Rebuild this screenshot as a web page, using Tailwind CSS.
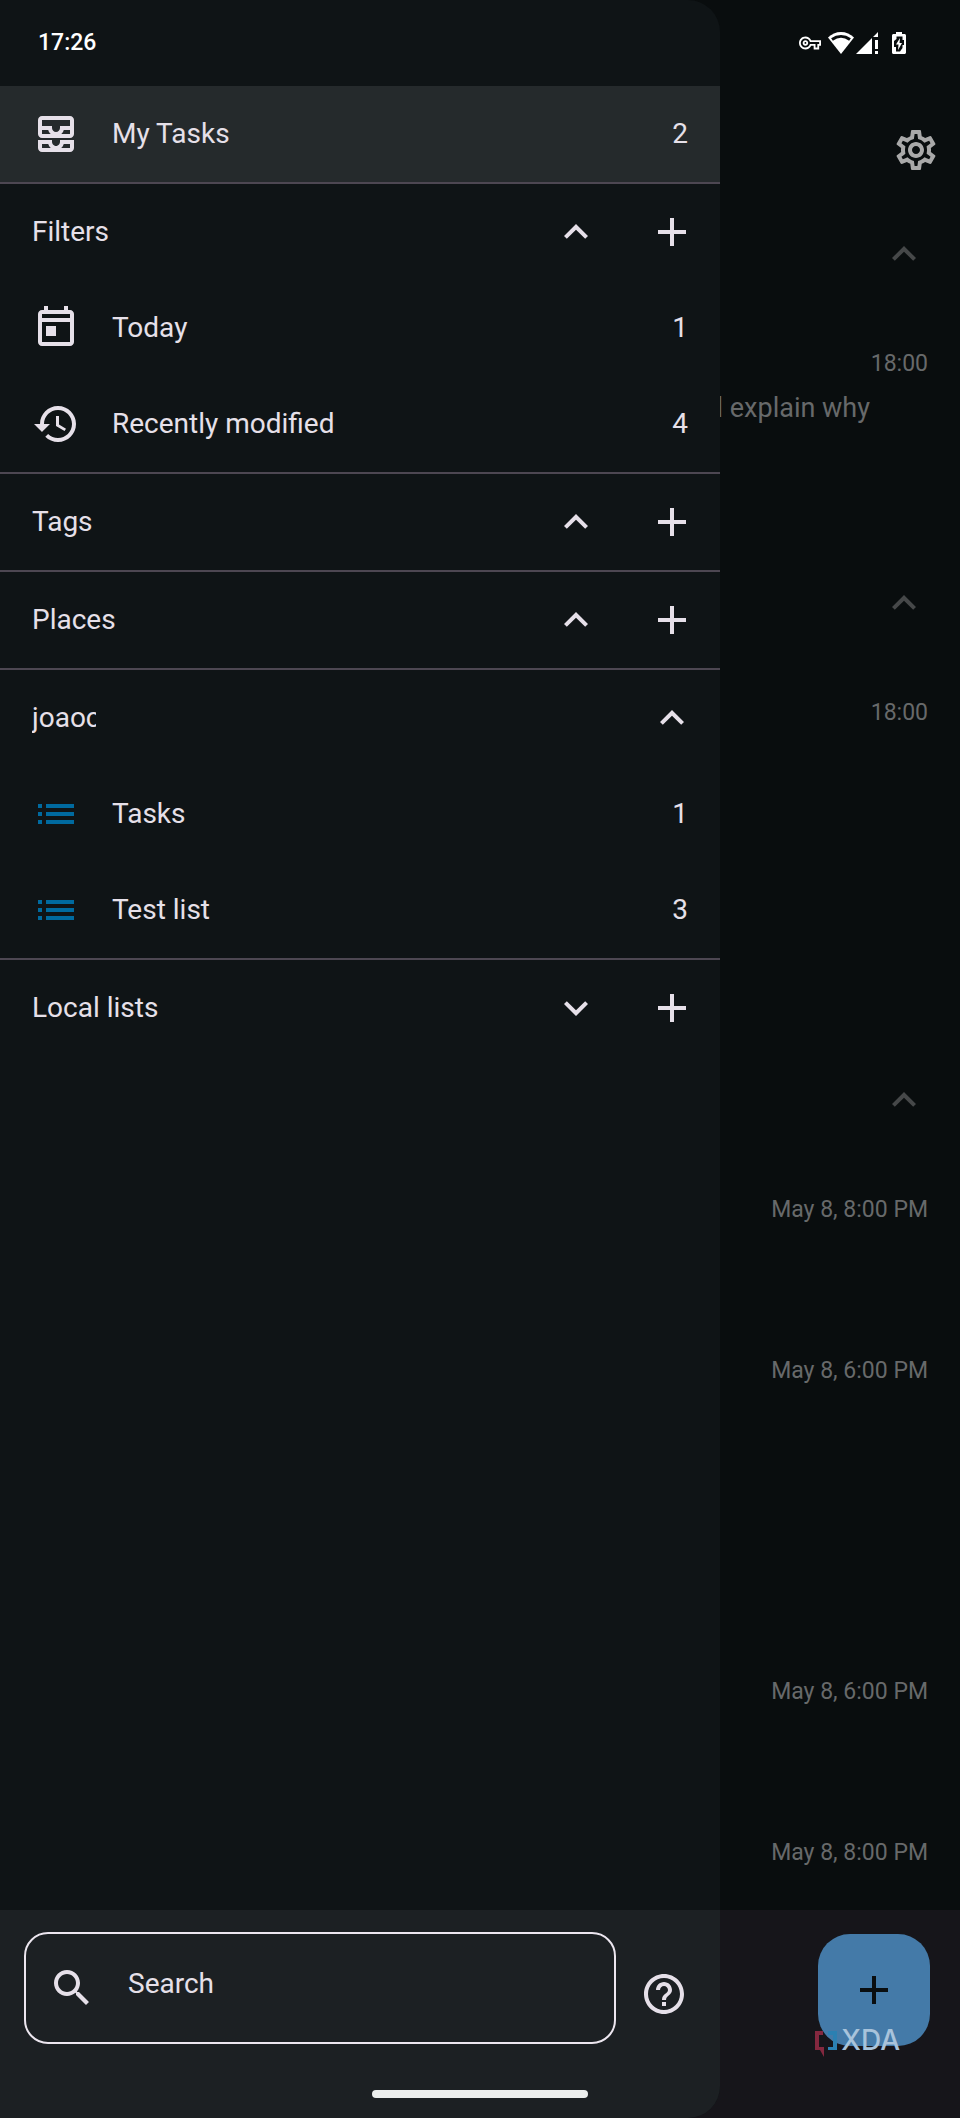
<!DOCTYPE html>
<html lang="en">
<head>
    <meta charset="UTF-8">
    <meta name="viewport" content="width=device-width, initial-scale=1.0">
    <title>My Tasks</title>
    <script src="https://cdn.jsdelivr.net/npm/@tailwindcss/browser@4"></script>
</head>
<body class="bg-[#090d0e] font-[Roboto,sans-serif] text-[28px] leading-10 text-[#e6e0e9]">

<!-- Icons -->
<svg class="hidden" xmlns="http://www.w3.org/2000/svg">
    <symbol id="icon-up" viewBox="0 0 24 24"><path d="M12 8l-6 6 1.41 1.41L12 10.83l4.59 4.58L18 14z"/></symbol>
    <symbol id="icon-down" viewBox="0 0 24 24"><path d="M16.59 8.59L12 13.17 7.41 8.59 6 10l6 6 6-6z"/></symbol>
    <symbol id="icon-add" viewBox="0 0 24 24"><path d="M19 13h-6v6h-2v-6H5v-2h6V5h2v6h6v2z"/></symbol>
    <symbol id="icon-list" viewBox="0 0 24 24"><path d="M3 7h2v2H3zM3 11h2v2H3zM3 15h2v2H3zM7 7h14v2H7zM7 11h14v2H7zM7 15h14v2H7z"/></symbol>
</svg>

<div class="relative min-h-screen flex flex-col overflow-hidden">

    <!-- Task list behind the drawer -->
    <main class="flex-1 flex flex-col pl-[75%] pt-[86px] text-[23px] leading-7 text-[#67696a]">
        <div class="h-32 flex items-center justify-end pr-5">
            <button type="button" aria-label="Settings" class="text-[#a9a9a9]">
                <svg class="size-12 fill-current" viewBox="0 0 24 24"><path d="M19.43 12.98c.04-.32.07-.64.07-.98 0-.34-.03-.66-.07-.98l2.11-1.65c.19-.15.24-.42.12-.64l-2-3.46c-.09-.16-.26-.25-.44-.25-.06 0-.12.01-.17.03l-2.49 1c-.52-.4-1.08-.73-1.69-.98l-.38-2.65C14.46 2.18 14.25 2 14 2h-4c-.25 0-.46.18-.49.42l-.38 2.65c-.61.25-1.17.59-1.69.98l-2.49-1c-.06-.02-.12-.03-.18-.03-.17 0-.34.09-.43.25l-2 3.46c-.13.22-.07.49.12.64l2.11 1.65c-.04.32-.07.65-.07.98 0 .33.03.66.07.98l-2.11 1.65c-.19.15-.24.42-.12.64l2 3.46c.09.16.26.25.44.25.06 0 .12-.01.17-.03l2.49-1c.52.4 1.08.73 1.69.98l.38 2.65c.03.24.24.42.49.42h4c.25 0 .46-.18.49-.42l.38-2.65c.61-.25 1.17-.59 1.69-.98l2.49 1c.06.02.12.03.18.03.17 0 .34-.09.43-.25l2-3.46c.12-.22.07-.49-.12-.64l-2.11-1.65zm-1.98-1.71c.04.31.05.52.05.73 0 .21-.02.43-.05.73l-.14 1.13.89.7 1.08.84-.7 1.21-1.27-.51-1.04-.42-.9.68c-.43.32-.84.56-1.25.73l-1.06.43-.16 1.13-.2 1.35h-1.4l-.19-1.35-.16-1.13-1.06-.43c-.43-.18-.83-.41-1.23-.71l-.91-.7-1.06.43-1.27.51-.7-1.21 1.08-.84.89-.7-.14-1.13c-.03-.31-.05-.54-.05-.74s.02-.43.05-.73l.14-1.13-.89-.7-1.08-.84.7-1.21 1.27.51 1.04.42.9-.68c.43-.32.84-.56 1.25-.73l1.06-.43.16-1.13.2-1.35h1.39l.19 1.35.16 1.13 1.06.43c.43.18.83.41 1.23.71l.91.7 1.06-.43 1.27-.51.7 1.21-1.07.85-.89.7.14 1.13zM12 8c-2.21 0-4 1.79-4 4s1.79 4 4 4 4-1.79 4-4-1.79-4-4-4zm0 6c-1.1 0-2-.9-2-2s.9-2 2-2 2 .9 2 2-.9 2-2 2z"/></svg>
            </button>
        </div>

        <section>
            <div class="h-20 flex items-center justify-end pr-8">
                <button type="button" aria-label="Collapse section" class="text-[#464849]"><svg class="size-12 fill-current"><use href="#icon-up"/></svg></button>
            </div>
            <ul>
                <li class="h-[269px] pt-14">
                    <p class="pr-8 text-right">18:00</p>
                    <p class="mt-2.5 flex justify-end pr-[90px] text-[27px] leading-10 whitespace-nowrap">l explain why</p>
                </li>
            </ul>
        </section>

        <section>
            <div class="h-20 flex items-center justify-end pr-8">
                <button type="button" aria-label="Collapse section" class="text-[#464849]"><svg class="size-12 fill-current"><use href="#icon-up"/></svg></button>
            </div>
            <ul class="pr-8 text-right">
                <li class="h-[417px] pt-14">18:00</li>
            </ul>
        </section>

        <section>
            <div class="h-20 flex items-center justify-end pr-8">
                <button type="button" aria-label="Collapse section" class="text-[#464849]"><svg class="size-12 fill-current"><use href="#icon-up"/></svg></button>
            </div>
            <ul class="pr-8 text-right whitespace-nowrap">
                <li class="h-[161px] pt-14">May 8, 8:00 PM</li>
                <li class="h-[321px] pt-14">May 8, 6:00 PM</li>
                <li class="h-[161px] pt-14">May 8, 6:00 PM</li>
                <li class="pt-14">May 8, 8:00 PM</li>
            </ul>
        </section>
    </main>

    <!-- Bottom app bar -->
    <div class="relative h-[208px] bg-[#16151a] flex justify-end items-start pt-6 pr-[30px]">
        <button type="button" aria-label="New task" class="size-28 rounded-[32px] bg-[#447aa8] text-[#0a0e10] flex items-center justify-center">
            <svg class="size-12 fill-current"><use href="#icon-add"/></svg>
        </button>
        <!-- Watermark -->
        <div class="absolute top-[113px] right-[60px] flex items-center gap-1 font-[Inter,sans-serif] font-medium text-[28px] leading-8 text-[#a8c3db]">
            <svg class="w-[22px] h-[26px] mt-2" viewBox="0 0 22 26">
                <path fill="#84283f" d="M0 0h8v4H4v12h5v10l-4-7H0z"/>
                <path fill="#2b80b2" d="M13 0h9v19h-9v-3h5V4h-5z"/>
            </svg>
            <span>XDA</span>
        </div>
    </div>

    <!-- Navigation drawer -->
    <aside class="absolute inset-y-0 left-0 w-3/4 flex flex-col bg-[#0f1416] rounded-r-[32px] overflow-hidden pt-[86px]">
        <nav class="flex-1">
            <a href="#" class="h-24 px-8 flex items-center gap-8 bg-[#252a2c]">
                <svg class="size-12 fill-current" viewBox="0 0 24 24"><path d="M19 3H5c-1.1 0-2 .9-2 2v7c0 1.1.9 2 2 2h14c1.1 0 2-.9 2-2V5c0-1.1-.9-2-2-2zM5 10h3.13c.21.78.67 1.47 1.27 2H5v-2zm14 2h-4.4c.6-.53 1.06-1.22 1.27-2H19v2zm0-4h-5v1c0 1.07-.93 2-2 2s-2-.93-2-2V8H5V5h14v3zm-5 7v1c0 .47-.19.9-.48 1.25-.37.45-.92.75-1.52.75s-1.15-.3-1.52-.75c-.29-.35-.48-.78-.48-1.25v-1H3v4c0 1.1.9 2 2 2h14c1.1 0 2-.9 2-2v-4h-7zm-9 2h3.13c.02.09.06.17.09.25.24.68.65 1.28 1.18 1.75H5v-2zm14 2h-4.4c.54-.47.95-1.07 1.18-1.75.03-.08.07-.17.09-.25H19v2z"/></svg>
                <span class="flex-1">My Tasks</span>
                <span>2</span>
            </a>

            <section class="border-t-2 border-[#4d4752]">
                <div class="h-24 pl-8 flex items-center">
                    <h2 class="flex-1">Filters</h2>
                    <button type="button" aria-label="Collapse filters" class="size-24 flex items-center justify-center"><svg class="size-12 fill-current"><use href="#icon-up"/></svg></button>
                    <button type="button" aria-label="Add filter" class="size-24 flex items-center justify-center"><svg class="size-12 fill-current"><use href="#icon-add"/></svg></button>
                </div>
                <a href="#" class="h-24 px-8 flex items-center gap-8">
                    <svg class="size-12 fill-current" viewBox="0 0 24 24"><path d="M19 3h-1V1h-2v2H8V1H6v2H5c-1.11 0-1.99.9-1.99 2L3 19c0 1.1.89 2 2 2h14c1.1 0 2-.9 2-2V5c0-1.1-.9-2-2-2zm0 16H5V9h14v10zm0-12H5V5h14v2zM7 11h5v5H7z"/></svg>
                    <span class="flex-1">Today</span>
                    <span>1</span>
                </a>
                <a href="#" class="h-24 px-8 flex items-center gap-8">
                    <svg class="size-12 fill-current" viewBox="0 0 24 24"><path d="M13 3c-4.97 0-9 4.03-9 9H1l3.89 3.89.07.14L9 12H6c0-3.87 3.13-7 7-7s7 3.13 7 7-3.13 7-7 7c-1.93 0-3.68-.79-4.94-2.06l-1.42 1.42C8.27 19.99 10.51 21 13 21c4.97 0 9-4.03 9-9s-4.03-9-9-9zm-1 5v5l4.28 2.54.72-1.21-3.5-2.08V8H12z"/></svg>
                    <span class="flex-1">Recently modified</span>
                    <span>4</span>
                </a>
            </section>

            <section class="border-t-2 border-[#4d4752]">
                <div class="h-24 pl-8 flex items-center">
                    <h2 class="flex-1">Tags</h2>
                    <button type="button" aria-label="Collapse tags" class="size-24 flex items-center justify-center"><svg class="size-12 fill-current"><use href="#icon-up"/></svg></button>
                    <button type="button" aria-label="Add tag" class="size-24 flex items-center justify-center"><svg class="size-12 fill-current"><use href="#icon-add"/></svg></button>
                </div>
            </section>

            <section class="border-t-2 border-[#4d4752]">
                <div class="h-24 pl-8 flex items-center">
                    <h2 class="flex-1">Places</h2>
                    <button type="button" aria-label="Collapse places" class="size-24 flex items-center justify-center"><svg class="size-12 fill-current"><use href="#icon-up"/></svg></button>
                    <button type="button" aria-label="Add place" class="size-24 flex items-center justify-center"><svg class="size-12 fill-current"><use href="#icon-add"/></svg></button>
                </div>
            </section>

            <section class="border-t-2 border-[#4d4752]">
                <div class="h-24 pl-8 flex items-center justify-between">
                    <h2 class="w-16 overflow-hidden whitespace-nowrap">joaoc</h2>
                    <button type="button" aria-label="Collapse account" class="size-24 flex items-center justify-center"><svg class="size-12 fill-current"><use href="#icon-up"/></svg></button>
                </div>
                <a href="#" class="h-24 px-8 flex items-center gap-8">
                    <svg class="size-12 fill-[#006a9f]"><use href="#icon-list"/></svg>
                    <span class="flex-1">Tasks</span>
                    <span>1</span>
                </a>
                <a href="#" class="h-24 px-8 flex items-center gap-8">
                    <svg class="size-12 fill-[#006a9f]"><use href="#icon-list"/></svg>
                    <span class="flex-1">Test list</span>
                    <span>3</span>
                </a>
            </section>

            <section class="border-t-2 border-[#4d4752]">
                <div class="h-24 pl-8 flex items-center">
                    <h2 class="flex-1">Local lists</h2>
                    <button type="button" aria-label="Expand local lists" class="size-24 flex items-center justify-center"><svg class="size-12 fill-current"><use href="#icon-down"/></svg></button>
                    <button type="button" aria-label="Add local list" class="size-24 flex items-center justify-center"><svg class="size-12 fill-current"><use href="#icon-add"/></svg></button>
                </div>
            </section>
        </nav>

        <div class="h-[208px] bg-[#1c2023] pl-6 pr-8 pt-[22px] flex items-start gap-6">
            <label class="flex-1 h-28 flex items-center gap-8 px-[22px] border-2 border-[#ece6ef] rounded-3xl">
                <svg class="size-12 fill-current" viewBox="0 0 24 24"><path d="M15.5 14h-.79l-.28-.27C15.41 12.59 16 11.11 16 9.5 16 5.91 13.09 3 9.5 3S3 5.91 3 9.5 5.91 16 9.5 16c1.61 0 3.09-.59 4.23-1.57l.27.28v.79l5 4.99L20.49 19l-4.99-5zm-6 0C7.01 14 5 11.99 5 9.5S7.01 5 9.5 5 14 7.01 14 9.5 11.99 14 9.5 14z"/></svg>
                <input type="text" placeholder="Search" aria-label="Search" class="flex-1 min-w-0 pb-2 bg-transparent outline-none placeholder:text-[#e6e0e9]">
            </label>
            <button type="button" aria-label="Help" class="h-[124px] flex items-center">
                <svg class="size-12 fill-current" viewBox="0 0 24 24"><path d="M11 18h2v-2h-2v2zm1-16C6.48 2 2 6.48 2 12s4.48 10 10 10 10-4.48 10-10S17.52 2 12 2zm0 18c-4.41 0-8-3.59-8-8s3.59-8 8-8 8 3.59 8 8-3.59 8-8 8zm0-14c-2.21 0-4 1.79-4 4h2c0-1.1.9-2 2-2s2 .9 2 2c0 2-3 1.75-3 5h2c0-2.25 3-2.5 3-5 0-2.21-1.79-4-4-4z"/></svg>
            </button>
        </div>
    </aside>

    <!-- Status bar -->
    <header class="absolute inset-x-0 top-0 h-[86px] pl-[38px] pr-[54px] flex items-center text-[23px] font-medium text-white">
        <span class="flex-1">17:26</span>
        <svg class="w-[22px] h-[14px] mr-[7px] fill-current" viewBox="0 5 24 14"><path d="M22 19h-6v-4h-2.68c-1.14 2.42-3.6 4-6.32 4-3.86 0-7-3.14-7-7s3.14-7 7-7c2.72 0 5.17 1.58 6.32 4H24v6h-2v4zm-4-2h2v-4h2v-2H11.94l-.23-.67C11.01 8.34 9.11 7 7 7c-2.76 0-5 2.24-5 5s2.24 5 5 5c2.11 0 4.01-1.34 4.71-3.33l.23-.67H18v4zM7 15c-1.65 0-3-1.35-3-3s1.35-3 3-3 3 1.35 3 3-1.35 3-3 3zm0-4c-.55 0-1 .45-1 1s.45 1 1 1 1-.45 1-1-.45-1-1-1z"/></svg>
        <svg class="w-[26px] h-[22px] mr-[2px]" viewBox="0 0 26 22">
            <path fill="currentColor" d="M0 5.5C3.500 2 8 0 13 0s9.500 2 13 5.500L13 22z"/>
            <path fill="none" stroke="#090d0e" stroke-width="3" d="M4 7.500C9.500 3.500 16.500 3.500 22 7.500"/>
        </svg>
        <svg class="size-[22px] mr-[14px] fill-current" viewBox="0 0 22 22"><path d="M0 22L16 6v16zM17 5l5-5v5zM19 8h3v9h-3zM19 19h3v3h-3z"/></svg>
        <svg class="w-[14px] h-[22px]" viewBox="0 0 14 22">
            <path fill="currentColor" d="M4 0h6v2h2.500c.8 0 1.500.7 1.500 1.500v17c0 .8-.7 1.500-1.500 1.500h-11C.7 22 0 21.300 0 20.500v-17C0 2.700.7 2 1.500 2H4z"/>
            <path fill="#090d0e" d="M4.500 4.500h6V8H12v5h-1.500v3L8 19.500H4V15H2V9l2.500-2z"/>
            <path fill="currentColor" d="M8 6L4 12.500h2.500L6 18l4-7H7.500z"/>
        </svg>
    </header>

    <!-- Gesture bar -->
    <div class="absolute inset-x-0 bottom-5 flex justify-center">
        <div class="w-[216px] h-2 rounded-full bg-[#eceeed]"></div>
    </div>
</div>
</body>
</html>
